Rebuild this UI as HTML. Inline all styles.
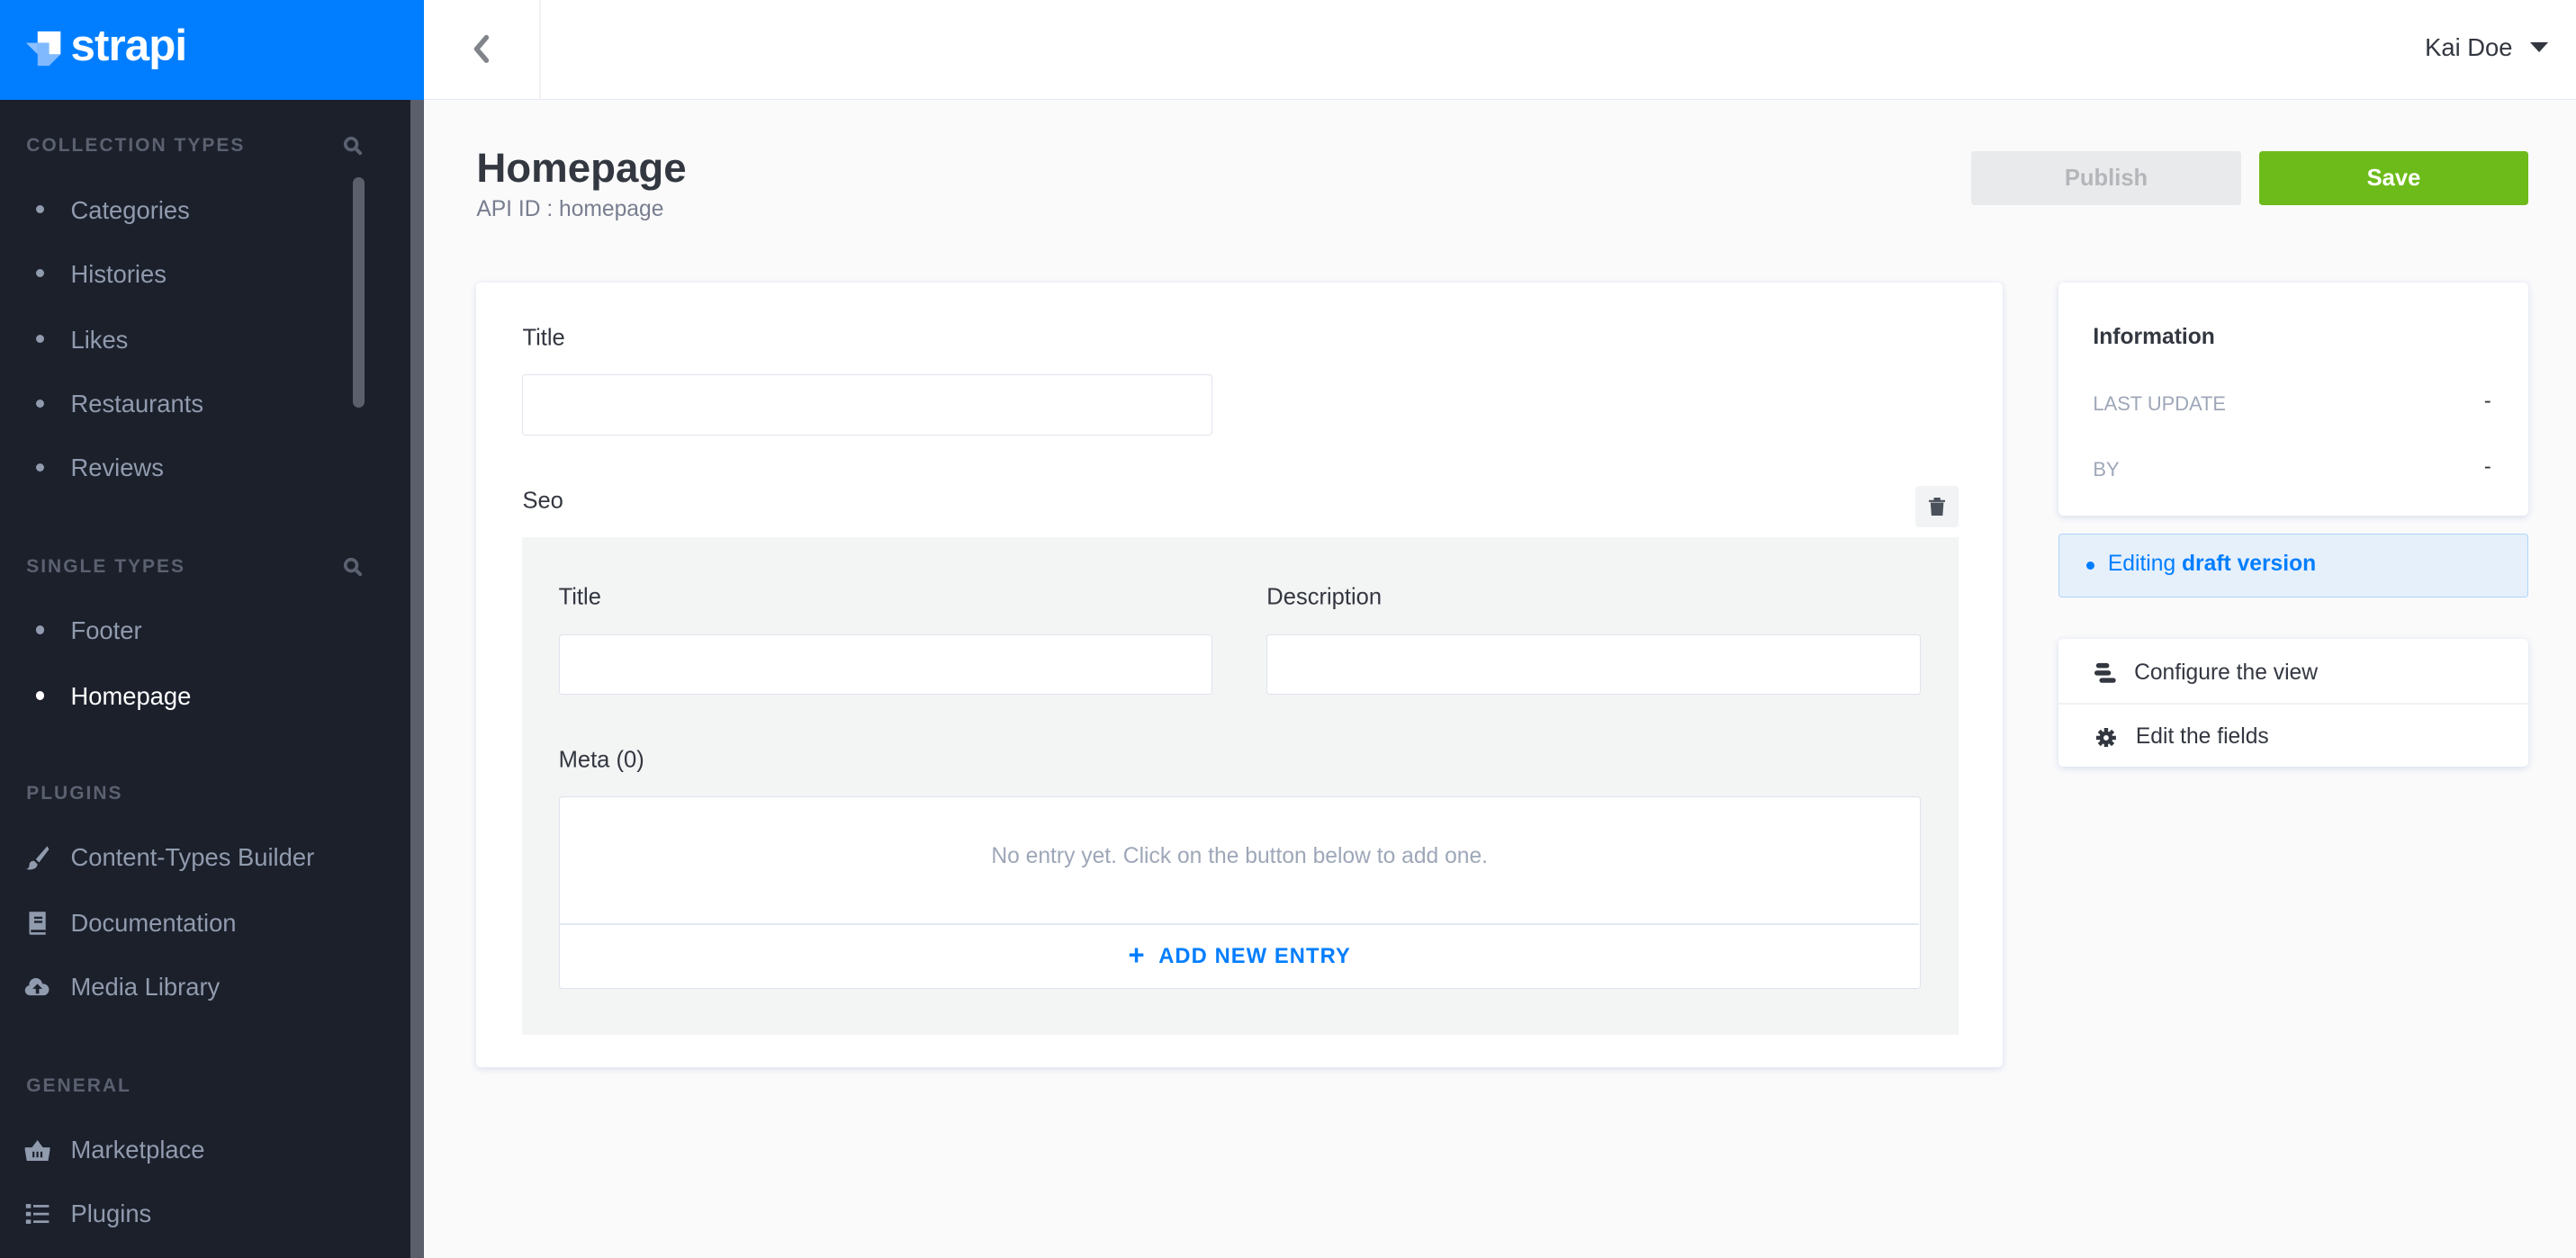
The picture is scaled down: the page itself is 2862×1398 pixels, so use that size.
<!DOCTYPE html>
<html><head><meta charset="utf-8"><style>
html,body{margin:0;padding:0;width:2862px;height:1398px;overflow:hidden;background:#fafafb}
#w{zoom:1.8253;width:1568px;height:766px;position:relative;font-family:"Liberation Sans",sans-serif;color:#333740}
.a{position:absolute}
.side{left:0;top:0;width:250px;height:766px;background:#1b202b}
.logo{left:0;top:0;width:258px;height:61px;background:#007eff}
.strip{left:250px;top:61px;width:8px;height:705px;background:#5b5f6b}
.h{position:absolute;left:16px;font-size:11.5px;font-weight:bold;letter-spacing:1.1px;color:#5b6170;transform:translateY(-50%)}
.it{position:absolute;left:43px;font-size:15px;color:#919bae;transform:translateY(-50%);white-space:nowrap}
.dot{position:absolute;left:22px;width:5px;height:5px;border-radius:50%;background:#919bae}
.ic{position:absolute;left:15px;transform:translateY(-50%)}
.top{left:258px;top:0;width:1310px;height:61px;background:#fff;border-bottom:1px solid #e3e9f3;box-sizing:border-box}
.card{background:#fff;border-radius:3px;box-shadow:0 1px 4px rgba(215,222,235,1)}
.lbl{position:absolute;font-size:14px;color:#333740;transform:translateY(-50%)}
.inp{position:absolute;background:#fff;border:1px solid #dfe3ec;border-radius:2px;box-sizing:border-box}
</style></head><body><div id="w">
<div class="a side"></div>
<div class="a logo">
<svg class="a" style="left:16px;top:18px" width="26" height="28" viewBox="0 0 26 28"><path d="M7 1h14v14h-7V8H7z" fill="#fff"/><path d="M0 8h7v7z" fill="#8fc0ff"/><path d="M7 8h7v7h7l-7 7h-7z" fill="#8fc0ff" opacity=".9"/></svg>
<div class="a" style="left:43px;top:12px;font-size:27px;font-weight:bold;color:#fff;letter-spacing:-0.5px">strapi</div>
</div>
<div class="a strip"></div>
<div class="a" style="left:215px;top:108px;width:7px;height:140px;border-radius:4px;background:#5b5f6b"></div>

<div class="h" style="top:89px">COLLECTION TYPES</div>
<svg class="a" style="left:209px;top:83px" width="12" height="12" viewBox="0 0 12 12"><circle cx="5" cy="5" r="3.5" stroke="#5b6170" stroke-width="2" fill="none"/><path d="M7.5 7.5l3 3" stroke="#5b6170" stroke-width="2.2" stroke-linecap="round"/></svg>
<div class="dot" style="top:125px"></div><div class="it" style="top:128px">Categories</div>
<div class="dot" style="top:164px"></div><div class="it" style="top:167px">Histories</div>
<div class="dot" style="top:204px"></div><div class="it" style="top:207px">Likes</div>
<div class="dot" style="top:243px"></div><div class="it" style="top:246px">Restaurants</div>
<div class="dot" style="top:282px"></div><div class="it" style="top:285px">Reviews</div>
<div class="h" style="top:345px">SINGLE TYPES</div>
<svg class="a" style="left:209px;top:339px" width="12" height="12" viewBox="0 0 12 12"><circle cx="5" cy="5" r="3.5" stroke="#5b6170" stroke-width="2" fill="none"/><path d="M7.5 7.5l3 3" stroke="#5b6170" stroke-width="2.2" stroke-linecap="round"/></svg>
<div class="dot" style="top:381px"></div><div class="it" style="top:384px">Footer</div>
<div class="dot" style="top:421px;background:#fff"></div><div class="it" style="top:424px;color:#fff">Homepage</div>
<div class="h" style="top:483px">PLUGINS</div>
<svg class="ic" style="top:522px" width="16" height="16" viewBox="0 0 16 16"><path d="M14 1L7 9l2 2 6-8z M6 10c-2 0-3 1-3 3 0 1-1 2-2 2 3 1 7 0 7-3z" fill="#919bae"/></svg><div class="it" style="top:522px">Content-Types Builder</div>
<svg class="ic" style="top:562px" width="16" height="16" viewBox="0 0 16 16"><path d="M3 1h10v14H4a1 1 0 0 1-1-1z" fill="#919bae"/><rect x="6" y="4" width="5" height="1.3" fill="#1b202b"/><rect x="6" y="6.5" width="5" height="1.3" fill="#1b202b"/><rect x="4" y="12" width="9" height="1.5" fill="#1b202b"/></svg><div class="it" style="top:562px">Documentation</div>
<svg class="ic" style="top:601px" width="16" height="16" viewBox="0 0 16 16"><path d="M4 13a3 3 0 0 1-1-6 4 4 0 0 1 8-1 3.5 3.5 0 0 1 1 7z" fill="#919bae"/><path d="M8 6l-3 3h2v3h2V9h2z" fill="#1b202b"/></svg><div class="it" style="top:601px">Media Library</div>
<div class="h" style="top:661px">GENERAL</div>
<svg class="ic" style="top:700px" width="16" height="16" viewBox="0 0 16 16"><path d="M1 7h14v1l-1 6H2L1 8z M5 7l3-4 3 4" fill="#919bae" stroke="#919bae" stroke-width="1.2"/><rect x="5" y="9" width="1.2" height="3.5" fill="#1b202b"/><rect x="7.4" y="9" width="1.2" height="3.5" fill="#1b202b"/><rect x="9.8" y="9" width="1.2" height="3.5" fill="#1b202b"/></svg><div class="it" style="top:700px">Marketplace</div>
<svg class="ic" style="top:739px" width="16" height="16" viewBox="0 0 16 16"><g fill="#919bae"><rect x="1" y="2" width="3" height="2.5"/><rect x="1" y="6.8" width="3" height="2.5"/><rect x="1" y="11.5" width="3" height="2.5"/><rect x="5.5" y="2.5" width="9.5" height="1.5"/><rect x="5.5" y="7.3" width="9.5" height="1.5"/><rect x="5.5" y="12" width="9.5" height="1.5"/></g></svg><div class="it" style="top:739px">Plugins</div>

<div class="a top"></div>
<div class="a" style="left:328px;top:0;width:1px;height:61px;background:#f1f1f2"></div>
<svg class="a" style="left:287px;top:21px" width="12" height="18" viewBox="0 0 12 18"><path d="M9 2L3 9l6 7" stroke="#81848a" stroke-width="3" fill="none" stroke-linecap="round" stroke-linejoin="round"/></svg>
<div class="a" style="left:1476px;top:20px;font-size:15px;color:#333740">Kai Doe</div>
<svg class="a" style="left:1540px;top:26px" width="11" height="7"><path d="M0 0h11L5.5 6z" fill="#333740"/></svg>

<div class="a" style="left:290px;top:88px;font-size:25px;font-weight:bold;color:#333740">Homepage</div>
<div class="a" style="left:290px;top:120px;font-size:13.5px;color:#787e8f">API ID : homepage</div>
<div class="a" style="left:1200px;top:92px;width:164px;height:33px;background:#e9eaeb;border-radius:2px;color:#b4b6ba;font-size:14px;font-weight:bold;text-align:center;line-height:33px">Publish</div>
<div class="a" style="left:1375px;top:92px;width:164px;height:33px;background:#6dbb1a;border-radius:2px;color:#fff;font-size:14px;font-weight:bold;text-align:center;line-height:33px">Save</div>

<div class="a card" style="left:290px;top:172px;width:929px;height:478px"></div>
<div class="lbl" style="left:318px;top:206px">Title</div>
<div class="inp" style="left:318px;top:228px;width:420px;height:37px"></div>
<div class="lbl" style="left:318px;top:305px">Seo</div>
<div class="a" style="left:1166px;top:296px;width:26px;height:25px;background:#f2f3f4;border-radius:2px"></div>
<svg class="a" style="left:1174px;top:303px" width="10" height="11" viewBox="0 0 10 11"><path d="M0 1.5h10v1.2H0z M3 0h4v1.5H3z M1 3h8l-.6 8H1.6z" fill="#4b515a"/></svg>
<div class="a" style="left:318px;top:327px;width:874px;height:303px;background:#f3f4f4"></div>
<div class="lbl" style="left:340px;top:364px">Title</div>
<div class="lbl" style="left:771px;top:364px">Description</div>
<div class="inp" style="left:340px;top:386px;width:398px;height:37px"></div>
<div class="inp" style="left:771px;top:386px;width:398px;height:37px"></div>
<div class="lbl" style="left:340px;top:463px">Meta (0)</div>
<div class="inp" style="left:340px;top:485px;width:829px;height:117px"></div>
<div class="a" style="left:341px;top:562px;width:827px;height:1px;background:#e3e9f3"></div>
<div class="a" style="left:340px;top:514px;width:829px;text-align:center;font-size:13.5px;color:#9ea7b8">No entry yet. Click on the button below to add one.</div>
<div class="a" style="left:340px;top:572px;width:829px;text-align:center;font-size:13px;font-weight:bold;color:#007eff;letter-spacing:.6px"><span style="font-size:17px;vertical-align:-1px">+</span>&nbsp; ADD NEW ENTRY</div>

<div class="a card" style="left:1253px;top:172px;width:286px;height:142px"></div>
<div class="a" style="left:1274px;top:198px;font-size:13.5px;font-weight:bold;color:#333740">Information</div>
<div class="a" style="left:1274px;top:239px;font-size:12px;color:#9ea7b8">LAST UPDATE</div>
<div class="a" style="left:1512px;top:237px;font-size:13px">-</div>
<div class="a" style="left:1274px;top:279px;font-size:12px;color:#9ea7b8">BY</div>
<div class="a" style="left:1512px;top:277px;font-size:13px">-</div>
<div class="a" style="left:1253px;top:325px;width:286px;height:39px;box-sizing:border-box;background:#e6f0fb;border:1px solid #aed4fb;border-radius:2px"></div>
<div class="a" style="left:1270px;top:342px;width:5px;height:5px;border-radius:50%;background:#007eff"></div>
<div class="a" style="left:1283px;top:336px;font-size:13.5px;color:#007eff">Editing <b>draft version</b></div>
<div class="a card" style="left:1253px;top:389px;width:286px;height:78px"></div>
<div class="a" style="left:1253px;top:428px;width:286px;height:1px;background:#f1f1f2"></div>
<svg class="a" style="left:1275px;top:403px" width="13" height="13" viewBox="0 0 13 13"><g fill="#333740"><rect x="1" y="0.5" width="8" height="3" rx="1.5"/><rect x="0" y="5" width="10" height="3" rx="1.5"/><rect x="3" y="9.5" width="10" height="3" rx="1.5"/></g></svg>
<div class="a" style="left:1299px;top:402px;font-size:13.5px">Configure the view</div>
<svg class="a" style="left:1276px;top:443px" width="12" height="12" viewBox="0 0 12 12"><circle cx="6" cy="6" r="4" fill="#333740"/><g stroke="#333740" stroke-width="2.4"><path d="M6 0v12M0 6h12M1.8 1.8l8.4 8.4M10.2 1.8l-8.4 8.4"/></g><circle cx="6" cy="6" r="1.6" fill="#fff"/></svg>
<div class="a" style="left:1300px;top:441px;font-size:13.5px">Edit the fields</div>
</div></body></html>
